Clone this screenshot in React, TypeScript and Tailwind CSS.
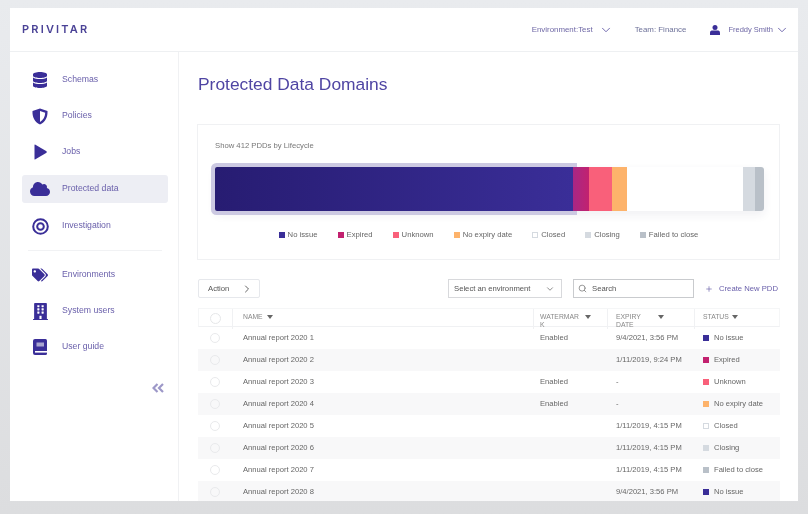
import { ReactNode } from "react";
import { ChevronDown, ChevronRight, Plus, Search } from "lucide-react";
import { FaBuilding, FaCloud, FaDatabase, FaTags } from "react-icons/fa";

const INK = "#3a2e98";

const ShieldIcon = () => (
  <svg viewBox="0 0 16 17" className="h-[17px] w-[16px]">
    <path
      fillRule="evenodd"
      fill={INK}
      d="M8 0.5 L15.5 3 C15.8 9 13.5 14 8 16.5 C2.5 14 0.2 9 0.5 3 Z M8 3 L8 14 C11.2 12.2 13 9 13.2 4.8 Z"
    />
  </svg>
);

const PlayIcon = () => (
  <svg viewBox="0 0 13 16" className="ml-[1px] h-[16px] w-[13px]">
    <path fill={INK} d="M1 0.5 L12.5 7.2 Q13 8 12.5 8.8 L1 15.5 Q0.5 15.6 0.5 15 L0.5 1 Q0.5 0.4 1 0.5 Z" />
  </svg>
);

const TargetIcon = () => (
  <svg viewBox="0 0 17 17" className="h-[17px] w-[17px]">
    <circle cx="8.5" cy="8.5" r="7.3" fill="none" stroke={INK} strokeWidth="2" />
    <circle cx="8.5" cy="8.5" r="3.3" fill="none" stroke={INK} strokeWidth="2" />
  </svg>
);

const BookIcon = () => (
  <svg viewBox="0 0 14 16" className="h-[16px] w-[14px]">
    <path fill={INK} d="M2 0 H12.5 Q14 0 14 1.5 V14.5 Q14 16 12.5 16 H2 Q0 16 0 14 V2 Q0 0 2 0 Z" />
    <rect x="3.5" y="3.5" width="7.5" height="4" fill="#a9a5d0" />
    <rect x="2" y="12" width="12" height="1.6" fill="#ffffff" />
  </svg>
);

const UserIcon = () => (
  <svg viewBox="0 0 10 10" className="ml-[24px] h-[10px] w-[10px]">
    <circle cx="5" cy="2.6" r="2.5" fill={INK} />
    <path fill={INK} d="M1.6 5.6 H8.4 Q10 6 10 7.6 V10 H0 V7.6 Q0 6 1.6 5.6 Z" />
  </svg>
);

const CollapseIcon = () => (
  <svg viewBox="0 0 12 10" className="h-[10px] w-[12px]" fill="none" stroke="#9d98c8" strokeWidth="2.2">
    <path d="M5.5 1 L1.5 5 L5.5 9" />
    <path d="M11 1 L7 5 L11 9" />
  </svg>
);

const navTop: { label: string; icon: ReactNode; active?: boolean }[] = [
  { label: "Schemas", icon: <FaDatabase size={16} color={INK} /> },
  { label: "Policies", icon: <ShieldIcon /> },
  { label: "Jobs", icon: <PlayIcon /> },
  { label: "Protected data", icon: <FaCloud size={20} color={INK} />, active: true },
  { label: "Investigation", icon: <TargetIcon /> },
];

const navBottom: { label: string; icon: ReactNode }[] = [
  { label: "Environments", icon: <FaTags size={16} color={INK} /> },
  { label: "System users", icon: <FaBuilding size={17} color={INK} /> },
  { label: "User guide", icon: <BookIcon /> },
];

const statusColors: Record<string, string> = {
  "No issue": "bg-[#3a2e98]",
  Expired: "bg-[#c2216f]",
  Unknown: "bg-[#f9607a]",
  "No expiry date": "bg-[#fdb36b]",
  Closed: "bg-white border border-[#d5dae0]",
  Closing: "bg-[#d5dae0]",
  "Failed to close": "bg-[#b9c0c8]",
};

const rows = [
  { name: "Annual report 2020 1", watermark: "Enabled", expiry: "9/4/2021, 3:56 PM", status: "No issue" },
  { name: "Annual report 2020 2", watermark: "", expiry: "1/11/2019, 9:24 PM", status: "Expired" },
  { name: "Annual report 2020 3", watermark: "Enabled", expiry: "-", status: "Unknown" },
  { name: "Annual report 2020 4", watermark: "Enabled", expiry: "-", status: "No expiry date" },
  { name: "Annual report 2020 5", watermark: "", expiry: "1/11/2019, 4:15 PM", status: "Closed" },
  { name: "Annual report 2020 6", watermark: "", expiry: "1/11/2019, 4:15 PM", status: "Closing" },
  { name: "Annual report 2020 7", watermark: "", expiry: "1/11/2019, 4:15 PM", status: "Failed to close" },
  { name: "Annual report 2020 8", watermark: "", expiry: "9/4/2021, 3:56 PM", status: "No issue" },
];

const Caret = () => <span className="mt-[2px] h-0 w-0 border-x-[3px] border-t-[4px] border-x-transparent border-t-[#666]" />;

const NavItem = ({ label, icon, active }: { label: string; icon: ReactNode; active?: boolean }) => (
  <div className={`flex h-7 items-center rounded-[3px] ${active ? "my-px bg-[#edeef4]" : ""}`}>
    <span className="flex w-9 justify-center">{icon}</span>
    <span className="ml-1 text-[8.7px] text-[#6a60ab]">{label}</span>
  </div>
);

export default function App() {
  return (
    <div className="flex h-[514px] w-[808px] flex-col overflow-hidden bg-gradient-to-b from-[#e9ebee] to-[#dcdddf] pb-[13px] pl-[10px] pr-[10px] pt-[8px] font-['Liberation_Sans',sans-serif] blur-[0.6px]">
      <div className="flex min-h-0 flex-1 flex-col overflow-hidden bg-white">
        <header className="flex h-[44px] shrink-0 items-center justify-between border-b border-[#eef0f2] pl-[12px] pr-[9.5px]">
          <span className="font-['Inter',sans-serif] text-[11px] font-semibold tracking-[0.2em] text-[#4a4296]">PRIVITAR</span>
          <div className="flex items-center text-[7.9px] text-[#6f68a6]">
            <span>Environment:Test</span>
            <ChevronDown size={14} strokeWidth={1.5} className="ml-[6.5px] text-[#5f56a3]" />
            <span className="ml-[21.5px] text-[#6d7199]">Team: Finance</span>
            <UserIcon />
            <span className="ml-[8px] text-[7.5px]">Freddy Smith</span>
            <ChevronDown size={14} strokeWidth={1.5} className="ml-[1.5px] text-[#5f56a3]" />
          </div>
        </header>

        <div className="flex min-h-0 flex-1">
          <aside className="w-[169px] shrink-0 border-r border-[#f0f1f3] pl-[12px] pr-[10px] pt-[14px]">
            <nav className="flex flex-col gap-2">
              {navTop.map((item) => (
                <NavItem key={item.label} {...item} />
              ))}
            </nav>
            <div className="mx-[6px] mb-[10px] mt-[10px] border-t border-[#f1f2f4]" />
            <nav className="flex flex-col gap-2">
              {navBottom.map((item) => (
                <NavItem key={item.label} {...item} />
              ))}
            </nav>
            <div className="mt-[22px] flex justify-end pr-[4px]">
              <CollapseIcon />
            </div>
          </aside>

          <main className="min-w-0 flex-1 pl-[19px] pr-[18px]">
            <h1 className="mt-[21px] text-[17.4px] leading-[22px] text-[#4f45a3]">Protected Data Domains</h1>

            <section className="-ml-px mt-[29px] h-[136px] border border-[#f0f1f3] pl-[17px] pr-[16px] pt-[15px]">
              <p className="text-[7.7px] leading-[11px] text-[#777]">Show 412 PDDs by Lifecycle</p>
              <div className="mt-[16px] flex h-[44px] w-[549px] rounded-[3px] shadow-[0_4px_10px_rgba(40,40,80,0.07)]">
                <div className="w-[358px] rounded-l-[2px] bg-gradient-to-r from-[#271c72] to-[#3a2e98] shadow-[0_0_0_4px_#ccc9e2]" />
                <div className="relative w-[16px] bg-gradient-to-r from-[#a92685] to-[#c2216f]" />
                <div className="relative w-[23px] bg-[#f9607a]" />
                <div className="relative w-[15px] bg-[#fdb36b]" />
                <div className="relative w-[116px] bg-white" />
                <div className="relative w-[12px] bg-[#d5dae0]" />
                <div className="relative w-[9px] rounded-r-[3px] bg-[#b9c0c8]" />
              </div>
              <div className="mt-[19px] flex justify-center gap-[20px] pr-[1px] text-[7.7px] leading-[10px] text-[#666]">
                {Object.keys(statusColors).map((s) => (
                  <span key={s} className="flex items-center gap-[3px]">
                    <span className={`h-[6px] w-[6px] ${statusColors[s]}`} />
                    {s}
                  </span>
                ))}
              </div>
            </section>

            <div className="mt-[19px] flex h-[19px] items-stretch text-[7.7px] text-[#555]">
              <button className="flex w-[62px] items-center justify-between rounded-[2px] border border-[#e6e8ec] pl-[9px] pr-[6px]">
                Action
                <ChevronRight size={12} className="text-[#666]" />
              </button>
              <button className="ml-[188px] flex w-[114px] items-center justify-between border border-[#d8d9dc] pl-[5px] pr-[6px]">
                Select an environment
                <ChevronDown size={10} className="text-[#777]" />
              </button>
              <div className="ml-[11px] flex w-[121px] items-center gap-[5px] border border-[#c9cbce] pl-[4px]">
                <Search size={9} className="text-[#777]" />
                <span>Search</span>
              </div>
              <div className="ml-[11px] flex items-center gap-[6px] whitespace-nowrap text-[#6a60ab]">
                <Plus size={8} />
                Create New PDD
              </div>
            </div>

            <div className="mt-[10px] text-[7.6px] text-[#666]">
              <div className="grid h-[19px] grid-cols-[33px_301px_74px_87px_85px] border border-[#f5f6f7] border-b-[#f0f1f3] text-[6.8px] leading-[8px] text-[#888]">
                <div className="flex items-center justify-center pb-px">
                  <span className="h-[11px] w-[11px] rounded-full border border-[#e6e7e9]" />
                </div>
                <div className="flex items-start gap-[4px] border-l border-[#f0f1f3] pl-[10px] pt-[4px]">
                  NAME <Caret />
                </div>
                <div className="flex items-start gap-[6px] border-l border-[#f0f1f3] pl-[6px] pt-[4px]">
                  <span className="w-[39px] break-all">WATERMARK</span>
                  <Caret />
                </div>
                <div className="flex items-start gap-[18px] border-l border-[#f0f1f3] pl-[8px] pt-[4px]">
                  <span className="w-[24px]">EXPIRY DATE</span>
                  <Caret />
                </div>
                <div className="flex items-start gap-[3px] border-l border-[#f0f1f3] pl-[8px] pt-[4px]">
                  STATUS <Caret />
                </div>
              </div>
              {rows.map((r, i) => (
                <div
                  key={r.name}
                  className={`grid h-[22px] grid-cols-[34px_301px_74px_87px_86px] items-center ${i % 2 === 1 ? "bg-[#f8f8f9]" : ""}`}
                >
                  <div className="flex justify-center">
                    <span className="h-[10px] w-[10px] rounded-full border border-[#e9eaec]" />
                  </div>
                  <div className="pl-[11px]">{r.name}</div>
                  <div className="pl-[7px]">{r.watermark}</div>
                  <div className="pl-[9px]">{r.expiry}</div>
                  <div className="flex items-center gap-[5px] pl-[9px]">
                    <span className={`h-[6px] w-[6px] ${statusColors[r.status]}`} />
                    {r.status}
                  </div>
                </div>
              ))}
            </div>
          </main>
        </div>
      </div>
    </div>
  );
}
